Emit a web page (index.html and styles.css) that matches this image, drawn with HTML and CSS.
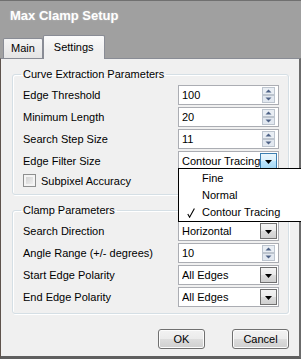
FILE: index.html
```html
<!DOCTYPE html>
<html>
<head>
<meta charset="utf-8">
<link rel="stylesheet" href="styles.css">
</head>
<body>
<div class="window">
  <div class="titlebar"><span class="title">Max Clamp Setup</span></div>
  <div class="tabstrip">
    <div class="tab">Main</div>
    <div class="tab active">Settings</div>
  </div>
  <div class="panel">
    <fieldset class="group">
      <legend>Curve Extraction Parameters</legend>
      <div class="row">
        <span class="lbl">Edge Threshold</span>
        <div class="field"><span class="val">100</span>
          <svg class="spin" width="13" height="16" viewBox="0 0 13 16"><rect x="0.5" y="0.5" width="12" height="7" fill="#e9eef4" stroke="#bcc4ce"/><rect x="0.5" y="8.5" width="12" height="7" fill="#e2e8f0" stroke="#bcc4ce"/><path d="M6.5 2.5 L9.5 5.5 L3.5 5.5 Z" fill="#4e6286"/><path d="M3.5 10.5 L9.5 10.5 L6.5 13.5 Z" fill="#4e6286"/></svg>
        </div>
      </div>
      <div class="row">
        <span class="lbl">Minimum Length</span>
        <div class="field"><span class="val">20</span>
          <svg class="spin" width="13" height="16" viewBox="0 0 13 16"><rect x="0.5" y="0.5" width="12" height="7" fill="#e9eef4" stroke="#bcc4ce"/><rect x="0.5" y="8.5" width="12" height="7" fill="#e2e8f0" stroke="#bcc4ce"/><path d="M6.5 2.5 L9.5 5.5 L3.5 5.5 Z" fill="#4e6286"/><path d="M3.5 10.5 L9.5 10.5 L6.5 13.5 Z" fill="#4e6286"/></svg>
        </div>
      </div>
      <div class="row">
        <span class="lbl">Search Step Size</span>
        <div class="field"><span class="val">11</span>
          <svg class="spin" width="13" height="16" viewBox="0 0 13 16"><rect x="0.5" y="0.5" width="12" height="7" fill="#e9eef4" stroke="#bcc4ce"/><rect x="0.5" y="8.5" width="12" height="7" fill="#e2e8f0" stroke="#bcc4ce"/><path d="M6.5 2.5 L9.5 5.5 L3.5 5.5 Z" fill="#4e6286"/><path d="M3.5 10.5 L9.5 10.5 L6.5 13.5 Z" fill="#4e6286"/></svg>
        </div>
      </div>
      <div class="row">
        <span class="lbl">Edge Filter Size</span>
        <div class="field combo"><span class="val">Contour Tracing</span>
          <span class="drop hot"><svg width="7" height="4" viewBox="0 0 7 4"><path d="M0 0 L7 0 L3.5 4 Z" fill="#000"/></svg></span>
          <div class="popup">
            <div class="item"><span class="mark"></span>Fine</div>
            <div class="item"><span class="mark"></span>Normal</div>
            <div class="item"><span class="mark"><svg width="8" height="10" viewBox="0 0 8 10"><path d="M0.8 6 L2.6 9.2 L7.4 0.6" fill="none" stroke="#000" stroke-width="1.1"/></svg></span>Contour Tracing</div>
          </div>
        </div>
      </div>
      <div class="check-row">
        <span class="checkbox"></span>
        <span class="lbl">Subpixel Accuracy</span>
      </div>
    </fieldset>

    <fieldset class="group second">
      <legend>Clamp Parameters</legend>
      <div class="row">
        <span class="lbl">Search Direction</span>
        <div class="field combo"><span class="val">Horizontal</span>
          <span class="drop"><svg width="7" height="4" viewBox="0 0 7 4"><path d="M0 0 L7 0 L3.5 4 Z" fill="#000"/></svg></span>
        </div>
      </div>
      <div class="row">
        <span class="lbl">Angle Range (+/- degrees)</span>
        <div class="field"><span class="val">10</span>
          <svg class="spin" width="13" height="16" viewBox="0 0 13 16"><rect x="0.5" y="0.5" width="12" height="7" fill="#e9eef4" stroke="#bcc4ce"/><rect x="0.5" y="8.5" width="12" height="7" fill="#e2e8f0" stroke="#bcc4ce"/><path d="M6.5 2.5 L9.5 5.5 L3.5 5.5 Z" fill="#4e6286"/><path d="M3.5 10.5 L9.5 10.5 L6.5 13.5 Z" fill="#4e6286"/></svg>
        </div>
      </div>
      <div class="row">
        <span class="lbl">Start Edge Polarity</span>
        <div class="field combo"><span class="val">All Edges</span>
          <span class="drop"><svg width="7" height="4" viewBox="0 0 7 4"><path d="M0 0 L7 0 L3.5 4 Z" fill="#000"/></svg></span>
        </div>
      </div>
      <div class="row">
        <span class="lbl">End Edge Polarity</span>
        <div class="field combo"><span class="val">All Edges</span>
          <span class="drop"><svg width="7" height="4" viewBox="0 0 7 4"><path d="M0 0 L7 0 L3.5 4 Z" fill="#000"/></svg></span>
        </div>
      </div>
    </fieldset>

    <div class="buttons">
      <button class="btn ok">OK</button>
      <button class="btn cancel">Cancel</button>
    </div>
  </div>
</div>
</body>
</html>
```

FILE: styles.css
```css
html, body {
  margin: 0;
  padding: 0;
}
body {
  width: 301px;
  height: 359px;
  overflow: hidden;
  background: #a0a0a0;
  font-family: "Liberation Sans", Arial, sans-serif;
  font-size: 11px;
  color: #000;
}
.window {
  height: 359px;
  box-sizing: border-box;
  border-top: 1px solid #707070;
  display: flex;
  flex-direction: column;
  background: #a0a0a0;
}
.titlebar {
  height: 34px;
  box-sizing: border-box;
  padding: 7px 0 0 10px;
}
.title {
  font-weight: bold;
  font-size: 13px;
  line-height: 16px;
  color: #fff;
  text-shadow: 0 0 2px rgba(255, 255, 255, 0.35);
}
.tabstrip {
  height: 23px;
  display: flex;
  align-items: flex-end;
  padding-left: 3px;
}
.tab {
  height: 20px;
  box-sizing: border-box;
  padding: 0 7px;
  border: 1px solid #898c95;
  border-bottom: none;
  background: linear-gradient(#f4f4f4, #e4e4e4);
  line-height: 19px;
  border-radius: 2px 2px 0 0;
}
.tab.active {
  height: 24px;
  margin-bottom: -1px;
  padding: 0 10px;
  line-height: 22px;
  background: linear-gradient(#fbfbfb, #f0f0f0 60%);
  position: relative;
  z-index: 1;
}
.panel {
  flex: 1;
  background: #f0f0f0;
  border-top: 1px solid #898c95;
  border-left: 1px solid #5e534c;
  border-right: 2px solid #6b6b6b;
  border-bottom: 3px solid #5f5f5f;
  padding-top: 8px;
}
.group {
  margin: 0 10px 0 11px;
  padding: 4px 9px 6px 10px;
  border: 1px solid #d5dfe5;
  border-radius: 3px;
  box-shadow: inset 1px 1px 0 #fff, 1px 1px 0 #fff;
  min-width: 0;
}
.group legend {
  padding: 0 2px;
  margin-left: -2px;
  line-height: 14px;
}
.group.second {
  margin-top: 8px;
}
.row {
  display: flex;
  align-items: center;
  justify-content: space-between;
  height: 20px;
  margin-bottom: 2px;
}
.group.second .row:last-child {
  margin-bottom: 0;
}
.lbl {
  white-space: nowrap;
}
.field {
  width: 101px;
  height: 20px;
  box-sizing: border-box;
  border: 1px solid #abadb3;
  background: #fff;
  display: flex;
  align-items: center;
  padding-left: 3px;
  position: relative;
}
.val {
  flex: 1;
  min-width: 0;
  white-space: nowrap;
  overflow: hidden;
}
.spin {
  margin-right: 3px;
  flex: none;
}
.drop {
  flex: none;
  width: 17px;
  height: 16px;
  box-sizing: border-box;
  border: 1px solid #707070;
  background: linear-gradient(#f3f3f3, #ebebeb 50%, #dcdcdc 51%, #d0d0d0);
  margin-right: 1px;
  display: flex;
  align-items: center;
  justify-content: center;
}
.drop svg {
  display: block;
  margin-top: 1px;
}
.drop.hot {
  border-color: #3c7fb1;
  background: linear-gradient(#eaf6fd, #d9f0fc 50%, #bee6fd 51%, #a7d9f5);
}
.popup {
  position: absolute;
  left: -1px;
  top: 16px;
  width: 123px;
  box-sizing: border-box;
  border: 1px solid #000;
  border-right: none;
  background: #fff;
  padding-bottom: 1px;
  z-index: 5;
}
.item {
  height: 17px;
  display: flex;
  align-items: center;
  white-space: nowrap;
}
.mark {
  width: 23px;
  height: 17px;
  flex: none;
  box-sizing: border-box;
  padding-left: 8px;
  display: flex;
  align-items: center;
}
.mark svg {
  display: block;
  margin-top: 3px;
}
.check-row {
  display: flex;
  align-items: center;
  gap: 5px;
  height: 15px;
  margin-top: 2px;
}
.checkbox {
  width: 13px;
  height: 13px;
  box-sizing: border-box;
  border: 1px solid #8e8f8f;
  background: linear-gradient(135deg, #cbcbcb, #f6f6f6);
  box-shadow: inset 0 0 0 2px #f4f4f4;
}
.buttons {
  display: flex;
  justify-content: flex-end;
  gap: 27px;
  margin: 15px 10px 0 0;
}
.btn {
  height: 20px;
  box-sizing: border-box;
  padding: 0;
  font-family: inherit;
  font-size: 11px;
  color: #000;
  border: 1px solid #707070;
  border-radius: 3px;
  background: linear-gradient(#f2f2f2, #ebebeb 50%, #dddddd 51%, #cfcfcf);
  box-shadow: inset 0 0 0 1px #fcfcfc;
}
.btn.ok {
  width: 47px;
}
.btn.cancel {
  width: 57px;
}
```
